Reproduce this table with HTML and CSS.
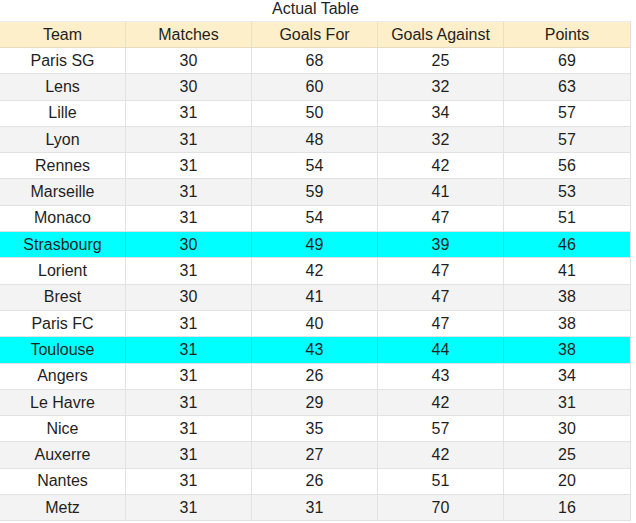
FILE: index.html
```html
<!DOCTYPE html>
<html>
<head>
<meta charset="utf-8">
<link rel="stylesheet" href="styles.css">
</head>
<body>
<div class="sheet">
  <div class="title">Actual Table</div>
  <div class="table">
    <div class="row head"><div>Team</div><div>Matches</div><div>Goals For</div><div>Goals Against</div><div>Points</div></div>
    <div class="row"><div>Paris SG</div><div>30</div><div>68</div><div>25</div><div>69</div></div>
    <div class="row alt"><div>Lens</div><div>30</div><div>60</div><div>32</div><div>63</div></div>
    <div class="row"><div>Lille</div><div>31</div><div>50</div><div>34</div><div>57</div></div>
    <div class="row alt"><div>Lyon</div><div>31</div><div>48</div><div>32</div><div>57</div></div>
    <div class="row"><div>Rennes</div><div>31</div><div>54</div><div>42</div><div>56</div></div>
    <div class="row alt"><div>Marseille</div><div>31</div><div>59</div><div>41</div><div>53</div></div>
    <div class="row"><div>Monaco</div><div>31</div><div>54</div><div>47</div><div>51</div></div>
    <div class="row hl"><div>Strasbourg</div><div>30</div><div>49</div><div>39</div><div>46</div></div>
    <div class="row"><div>Lorient</div><div>31</div><div>42</div><div>47</div><div>41</div></div>
    <div class="row alt"><div>Brest</div><div>30</div><div>41</div><div>47</div><div>38</div></div>
    <div class="row"><div>Paris FC</div><div>31</div><div>40</div><div>47</div><div>38</div></div>
    <div class="row hl"><div>Toulouse</div><div>31</div><div>43</div><div>44</div><div>38</div></div>
    <div class="row"><div>Angers</div><div>31</div><div>26</div><div>43</div><div>34</div></div>
    <div class="row alt"><div>Le Havre</div><div>31</div><div>29</div><div>42</div><div>31</div></div>
    <div class="row"><div>Nice</div><div>31</div><div>35</div><div>57</div><div>30</div></div>
    <div class="row alt"><div>Auxerre</div><div>31</div><div>27</div><div>42</div><div>25</div></div>
    <div class="row"><div>Nantes</div><div>31</div><div>26</div><div>51</div><div>20</div></div>
    <div class="row alt"><div>Metz</div><div>31</div><div>31</div><div>70</div><div>16</div></div>
  </div>
</div>
</body>
</html>
```

FILE: styles.css
```css
html, body {
  margin: 0;
  padding: 0;
  background: #ffffff;
}
.sheet {
  width: 631px;
  font-family: "Liberation Sans", Arial, sans-serif;
  font-size: 16px;
  color: #1f1f1f;
}
.title {
  height: 21px;
  line-height: 18px;
  text-align: center;
  border-bottom: 1px solid #ececec;
}
.table {
  border-right: 1px solid #e2e2e2;
}
.row {
  display: grid;
  grid-template-columns: 125px 126px 126px 126px 127px;
  height: 26.3px;
  box-sizing: border-box;
  border-bottom: 1px solid #e2e2e2;
  background: #ffffff;
}
.row > div {
  display: flex;
  align-items: center;
  justify-content: center;
  border-left: 1px solid #e2e2e2;
}
.row > div:first-child {
  border-left: none;
}
.row.head {
  height: 26px;
  background: #fdefca;
  border-bottom-color: #e8dcc0;
}
.row.head > div {
  border-left-color: #ece0c2;
}
.row.alt {
  background: #f3f3f3;
}
.row.hl {
  background: #00ffff;
}
.row.hl > div {
  border-left-color: #00e6e6;
}
```
